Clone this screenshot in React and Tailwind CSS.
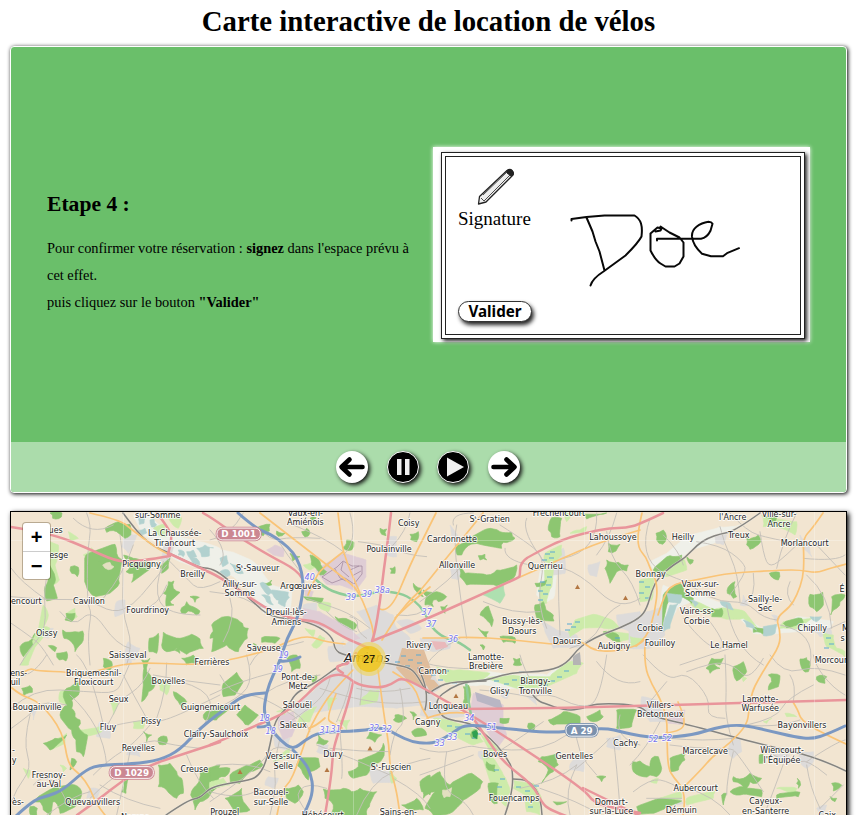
import React from "react";

// Each sheet is drawn at three times the map scale, from its own origin.
const sheets = [
  {
    x: 0, y: 505,
    water: ["400,30 450,35 490,70 540,95 600,110 660,130 660,200 600,190 530,165 480,120 430,90"],
    pond: ["415,40 435,38 432,55 418,58", "450,45 462,42 470,60 455,66", "535,135 552,140 550,155 535,150", "560,140 580,135 590,155 572,162", "590,130 615,120 640,128 635,150 605,155", "570,160 590,160 600,180 580,180", "410,75 435,70 440,84 418,88"],
    meadow: ["150,110 175,120 165,180 178,225 155,240 135,215 150,170", "130,300 145,330 130,365 150,370 110,420 85,480 60,480 85,420 115,380", "205,80 235,100 210,112", "250,150 275,128 280,145 258,165", "460,70 495,58 500,95 475,90", "505,30 545,38 535,70 515,55", "200,325 225,310 232,335 205,345"],
    urban: ["370,80 410,90 385,145 365,125", "350,290 375,285 375,320 345,335", "385,410 420,430 405,465 375,455", "490,120 525,120 510,165 480,170", "125,365 160,370 145,400 120,395"],
    forest: ["258,150 345,118 350,145 370,165 358,235 320,268 285,275 258,240", "315,70 355,50 390,58 392,90 375,100 350,80 320,82", "370,150 400,160 455,178 450,192 395,232 400,205 378,200 390,180", "150,24 186,24 184,36 158,40", "138,165 165,215 160,240 172,280 140,288 135,245 145,220", "480,185 510,160 505,190 485,205", "505,230 522,228 520,250 540,262 510,290 522,300 498,303 500,270 490,265", "490,382 540,400 575,388 600,402 610,430 560,448 530,430 500,440 485,420", "448,400 475,385 470,445 447,440", "198,325 225,325 215,350 195,345", "188,375 210,382 225,380 248,378 245,415 225,440 215,412 192,400", "60,425 85,410 105,385 98,420 70,455", "170,445 200,440 198,468 178,465", "145,422 170,428 165,440", "212,185 235,187 232,215 215,205", "645,375 660,365 660,400 630,400", "545,308 560,290 570,302 600,318 588,330 565,318 545,325", "570,275 598,277 585,292", "515,435 545,420 540,445", "295,170 300,165 304,172"],
    clear: ["308,180 330,172 342,185 325,194"],
    roads: ["260,24 275,60 262,140 262,300 275,320 262,400 270,480", "34,275 140,285 262,282 340,325 400,300 450,240 500,180", "130,60 160,140 130,250 140,370 90,430 60,480", "360,90 372,170 365,320 400,420 380,480", "500,160 560,220 600,260 660,230", "220,40 275,95 340,60", "180,320 220,370 275,310 350,420 390,430", "34,355 100,400 130,430 160,480", "140,285 60,230 34,190", "400,120 370,210 310,280", "500,240 480,300 420,320", "490,170 460,250 500,330 600,330"],
  },
  {
    x: 210, y: 505,
    water: ["0,130 60,140 130,170 180,240 245,260 240,320 160,325 130,270 60,210 0,185"],
    pond: ["30,160 50,152 55,175 38,185", "60,175 90,180 100,205 75,200", "150,235 165,235 190,265 175,270", "185,255 235,262 238,278 200,285", "155,270 180,275 190,300 170,290", "205,275 235,280 225,305 205,295", "130,190 150,185 150,200", "30,200 55,195 60,210 40,216"],
    meadow: ["325,290 362,295 355,320 330,310", "280,180 320,165 320,185 300,195", "285,370 315,375 310,395", "330,390 345,400 320,430 305,420"],
    mauve: ["318,195 400,145 468,165 468,215 435,258 390,240 350,238", "170,135 195,120 222,132 220,155 190,150", "280,310 330,320 410,365 450,400 420,410 350,370 280,345", "285,255 310,260 305,275 285,272"],
    urban: ["280,300 320,295 318,335 285,340", "440,320 500,300 550,330 560,370 600,400 600,480 400,480 380,440 430,395 480,370", "530,100 560,95 560,155 530,150", "560,350 600,345 635,370 600,385", "350,340 420,360 435,395 390,380", "355,425 400,410 400,465 360,470"],
    forest: ["5,360 45,335 90,350 100,365 115,370 112,400 85,440 50,420 5,440 10,390", "140,70 180,58 178,78 160,92 140,84", "200,78 225,85 205,94", "240,145 270,155 248,168", "300,150 330,170 350,200 330,210 305,180", "280,275 340,280 330,295 290,285", "375,335 398,340 440,360 430,375 385,350", "600,88 625,80 620,110 602,104", "410,105 432,112 425,135 398,128", "540,190 555,185 555,205 542,205", "155,398 210,400 195,415 155,412", "130,415 145,425 135,440", "300,40 318,38 310,50", "275,80 290,70 300,85 285,96", "510,70 530,72 528,92 515,88", "160,235 185,225 185,240", "610,235 635,250 640,275 620,260"],
    roads: ["0,105 60,95 100,24", "145,65 180,110 240,95 330,100", "420,24 445,110 400,150", "445,110 530,120 590,150 650,155", "250,60 350,100 400,140", "200,100 230,150 275,205", "0,260 90,270 150,310 250,330", "40,410 80,340 60,280", "290,280 350,300 430,330 480,370", "350,320 400,370 440,380", "420,335 445,340 440,380 470,400", "560,330 630,340 660,300", "120,480 145,430 230,425 280,410", "600,24 590,80 545,125", "0,75 60,140 30,180"],
  },
  {
    x: 420, y: 505,
    water: ["380,160 410,175 400,280 370,300 350,270 360,200"],
    meadow: ["375,145 425,120 425,150 400,180 375,170", "370,185 400,190 395,245 380,295 358,290 355,255 372,230", "445,380 465,345 520,328 580,348 600,370 545,368 490,370 450,395", "480,75 500,65 495,80 450,85", "435,24 455,24 440,50", "565,375 640,385 660,400 600,410"],
    mint: ["190,270 250,240 255,270 240,295"],
    urban: ["90,60 115,95 95,110", "85,170 125,180 115,225 95,220", "395,140 430,130 435,205 400,210", "505,180 540,170 530,215 510,210", "360,345 410,375 470,390 480,430 400,430 375,380", "590,330 660,320 660,395 600,370", "0,400 90,395 90,430 40,440 0,440"],
    forest: ["108,120 150,100 200,72 240,80 275,82 285,100 250,112 245,130 180,118 145,122 125,150 112,150", "115,185 135,205 200,210 230,195 290,180 280,220 230,242 140,240 120,215", "395,38 425,40 420,95 395,95 385,75", "560,165 595,172 625,180 620,198 590,200 570,235 555,190", "565,115 600,118 588,138 565,140", "180,330 205,303 220,345 215,365", "345,300 370,290 378,315 400,330 402,348 355,345", "10,255 50,260 80,275 55,290 40,285 40,305 15,300 20,275", "62,305 82,300 75,325", "175,152 195,148 200,165 180,165", "345,235 380,225 375,240 350,245", "175,370 205,380 200,400", "240,395 285,398 285,415 250,412", "550,380 595,390 600,410 570,400", "180,420 195,425 190,435", "480,24 560,24 500,42"],
    roads: ["110,60 100,100 125,310 140,400", "100,60 90,24 160,24", "240,60 335,120 375,165 350,300 380,370", "255,130 250,165 330,180", "430,160 535,140 530,24", "430,190 480,205 600,320 660,280", "415,190 415,290 420,390", "0,290 100,220 125,180", "320,40 300,80 380,180", "560,80 570,160 640,230 660,300", "190,290 280,330 360,320", "450,430 520,410 560,320 600,300", "590,24 570,100 530,150", "20,480 40,440 120,400"],
  },
  {
    x: 630, y: 505,
    water: ["60,170 100,150 170,90 270,65 330,60 260,110 190,130 120,190 80,210", "100,240 180,260 290,300 340,330 400,370 440,365 500,335 610,350 600,375 450,385 370,385 320,335 250,325 190,290 140,310 105,370 80,400"],
    pond: ["110,265 155,270 150,295 115,290", "120,300 145,295 120,370 100,380 110,330", "270,290 300,295 310,315 275,300", "340,345 370,360 380,375 350,365", "400,365 440,358 435,385 400,392", "540,335 575,335 560,350", "180,285 205,295 195,305"],
    meadow: ["30,225 70,220 65,285 30,290", "395,30 500,50 495,90 455,70 400,65", "180,295 200,290 250,315 290,310 345,320 380,365 340,340 280,340 220,325", "580,380 610,390 620,430 645,440 645,455 590,425", "0,395 50,400 20,425 0,420", "90,200 160,160 170,195 110,215", "460,350 545,340 500,372 450,370"],
    urban: ["50,320 105,300 105,390 60,430 0,430 0,370", "255,90 290,90 280,120 258,115", "510,90 540,120 545,155 520,130", "340,270 355,300 330,300", "425,330 450,340 435,350", "555,380 600,370 605,390 570,395"],
    forest: ["78,85 100,75 108,105 98,118 80,105", "70,195 120,152 155,150 160,165 120,190 90,205 75,205", "350,100 385,90 392,110 360,133 350,120", "540,268 578,262 580,300 560,320 540,305", "605,275 645,270 630,290 620,310 602,330", "100,270 150,235 160,260 190,280 185,295 150,275 115,290 98,365", "370,365 420,372 400,388 370,382", "460,355 515,340 520,352 470,368", "245,310 275,310 275,335 245,335", "418,205 448,202 445,225 430,220", "170,155 190,165 180,178", "300,240 315,230 320,275 310,280 292,265", "245,460 280,460 270,480 235,480", "510,462 530,458 535,480 512,475", "405,35 440,32 430,55"],
    roads: ["60,40 40,100 60,180 130,220 200,240", "270,65 280,110 325,205 330,290", "160,180 150,140 100,90", "200,110 270,120 340,170 350,205 300,270", "390,80 400,150 420,190 470,150 500,120", "300,24 350,80 420,100 520,120", "500,24 460,100 440,190", "370,205 380,280 345,290", "180,240 250,290 350,290 400,340 440,345", "160,340 230,430 300,430 240,350", "290,300 310,430 400,480", "300,430 150,480", "520,160 620,170 645,150", "530,210 600,270 605,370", "560,120 645,210", "450,360 560,380 540,480", "490,300 460,270 480,230", "600,370 645,350"],
  },
  {
    x: 0, y: 655,
    meadow: ["180,110 205,105 200,150 178,140", "135,265 200,235 195,265 150,285", "330,140 355,145 340,180", "240,225 300,215 305,230 245,245", "400,200 430,195 430,220 400,220", "180,330 200,340 190,350", "70,340 90,345 85,370", "470,70 510,80 500,120 480,105"],
    urban: ["300,200 325,205 330,250 290,245", "350,120 375,125 370,145", "390,275 420,280 420,305 380,300", "370,0 400,0 395,25 375,30", "270,400 300,405 290,430 260,430", "90,160 110,165 100,195"],
    forest: ["200,100 232,75 235,120 215,135 215,160 225,185 240,195 235,215 262,240 250,305 230,290 228,255 215,225 180,180 200,150 190,125", "425,15 450,10 440,50 465,90 445,110 425,140 430,90 430,50", "65,100 90,92 97,112 70,122", "520,110 560,140 550,160 535,140", "430,230 455,240 440,260", "475,330 510,325 530,350 545,370 550,415 530,430 500,405 475,395", "600,350 660,330 660,395 630,420 600,440 585,465 572,420 590,390", "160,400 225,390 245,410 230,450 180,475 165,440 100,440", "110,430 160,400 150,480 130,465", "545,10 580,0 585,25 560,30", "610,180 640,160 660,175 650,195 615,195", "475,250 500,245 498,268 478,268", "370,380 385,370 378,415 365,410", "310,10 335,20 330,45 310,35", "130,265 165,250 200,240 150,285", "215,310 230,320 210,345", "90,455 112,460 110,480 90,478"],
    roads: ["34,160 100,100 260,110 350,115 370,70 390,24", "210,120 310,210 320,330", "310,210 270,30 230,0", "320,215 345,170 360,135 430,90 450,40", "34,220 90,180 130,135 200,150", "325,215 440,190 460,205 540,180 660,120", "450,210 400,270 330,310 280,360", "440,190 400,120 370,60", "400,280 450,250 510,270 600,280", "390,290 380,340 350,480", "90,180 70,260 95,340 50,400 34,440", "200,440 150,330 100,390", "470,190 500,110 500,24", "590,240 640,180 620,100 540,80", "560,300 590,380 640,430", "300,390 380,440 480,460", "34,60 90,80 140,0", "270,430 330,370 370,350", "140,480 220,420 270,410", "460,60 560,80 660,90"],
  },
  {
    x: 210, y: 655,
    meadow: ["275,180 320,155 300,200 260,215", "0,380 40,370 60,390 0,405", "480,105 505,105 500,140 450,150 460,125", "385,195 420,195 410,225", "190,320 240,280 230,310", "350,130 380,130 355,165", "540,340 560,370 545,385", "200,170 230,155 225,180"],
    mauve: ["205,180 250,170 260,210 245,245 220,255 205,220"],
    urban: ["350,60 430,20 560,20 640,110 650,150 560,160 440,155 330,170 260,190 250,160 310,110", "325,265 355,270 355,300 320,290", "190,240 240,250 235,285 195,275", "175,365 205,370 190,400 165,390", "480,340 545,350 555,385 490,385", "640,150 660,140 660,180 640,175"],
    forest: ["40,85 80,52 100,80 75,120 40,125", "80,180 105,150 145,180 115,210 100,200", "270,310 325,310 330,335 300,350 295,375 275,345 260,330", "325,240 355,258 340,270 320,265", "445,315 505,290 520,265 518,310 480,335 470,360 430,370 415,350 445,335", "340,402 400,400 425,410 450,400 500,410 478,455 470,480 360,480 370,450 345,430", "225,400 265,390 280,410 255,445 230,430", "60,360 120,330 150,315 160,330 120,350 90,385 62,385", "45,430 95,400 100,440 120,465 70,470", "0,345 60,340 45,365 0,380", "555,180 590,190 575,200 550,195", "605,230 635,220 650,240 615,245", "480,230 515,240 495,262 470,250", "630,380 660,360 660,420 635,410", "0,175 30,150 60,160 15,195", "600,170 620,180 610,195", "230,10 260,0 270,40 245,50", "290,65 320,60 310,85", "575,450 620,430 640,465 600,470"],
    roads: ["110,0 130,70 90,130 0,170", "30,60 60,120 160,120 260,190", "0,120 80,80 200,50", "165,115 230,70 330,60", "240,200 300,160 350,110 360,70", "330,100 420,130 560,150 650,140", "300,230 280,180 230,160", "360,280 450,290 540,290", "390,230 400,350 395,370", "320,270 430,310 540,360", "550,350 480,380 440,480", "540,350 600,320 660,310", "550,370 640,420 660,460", "210,250 190,330 200,400 180,480", "250,290 200,260 150,330 60,400 0,440", "150,400 100,440 0,410", "570,100 590,200 550,230 540,300", "425,30 430,90 380,200", "450,30 460,80 450,150", "350,400 290,380 250,430 300,480", "600,100 500,120 440,100", "20,330 120,320 180,350"],
  },
  {
    x: 420, y: 655,
    water: ["100,60 210,50 300,60 380,60 440,20 480,25 460,60 380,95 260,100 180,90 80,85"],
    meadow: ["50,35 110,45 210,55 180,75 80,85 60,70", "200,70 290,62 390,65 450,20 490,25 470,55 380,95 290,100", "40,190 100,200 170,225 190,260 160,270 90,235 60,215", "185,300 220,310 250,360 270,410 260,455 220,410", "280,375 340,385 365,435 360,480 320,470 315,420 280,400", "180,235 230,270 240,300 210,290"],
    mauve: ["160,115 250,150 250,210 260,240 230,280 190,210 150,190"],
    urban: ["0,60 45,65 65,95 30,115 60,150 110,160 140,180 60,190 0,180", "455,15 480,0 482,28 460,32", "320,125 350,125 350,150", "175,290 210,290 210,320 180,310", "455,320 490,300 490,350 450,345", "560,250 600,240 600,285 560,275", "245,100 265,105 262,130 245,125"],
    forest: ["130,95 145,90 150,130 140,160 130,140", "385,195 430,170 480,185 480,210 400,210", "590,165 650,165 635,215 590,220", "365,305 410,295 415,330 400,350 365,385 385,345 355,320", "0,390 30,370 60,350 90,390 155,355 188,380 180,400 130,435 90,475 40,480 15,460 45,410 10,430", "155,230 172,225 172,252 155,250", "500,185 540,165 550,185 520,200", "325,205 345,210 340,230 328,225", "530,365 558,365 545,380", "200,320 225,330 225,350 205,345", "205,385 235,385 232,445 215,440", "240,190 268,190 265,203 240,203", "400,440 440,440 410,450", "280,10 300,10 305,30 280,30"],
    clear: ["68,405 95,398 90,425 72,428"],
    roads: ["0,280 60,300 150,270 180,280 370,290 440,240", "0,360 60,340 160,300", "340,125 380,110 480,160 540,140 560,0", "470,215 460,290 530,360", "570,250 530,290 470,340", "580,250 590,330 600,460", "200,310 240,290 370,200", "350,130 260,110 180,105", "470,330 430,410 450,480", "80,290 60,400 140,440 160,480", "600,180 580,250 660,270", "300,0 310,40 340,90", "300,400 410,380 470,330", "0,20 80,45 180,40", "360,400 480,440 540,480", "530,20 590,100 660,80"],
  },
  {
    x: 630, y: 655,
    meadow: ["170,430 255,410 250,430 170,450", "465,175 500,185 470,185", "400,200 425,190 410,205", "60,380 85,370 80,385", "440,400 500,400 490,420", "90,430 150,410 155,430 100,450", "340,65 350,70 340,80"],
    mauve: ["105,175 165,165 160,210 115,205"],
    urban: ["35,125 90,140 110,200 60,200 35,175", "300,260 330,250 335,290 310,310 295,290", "510,290 550,290 550,320 530,340 510,320", "120,430 150,420 160,445 130,450", "560,460 590,450 580,480", "430,300 480,300 470,320"],
    forest: ["8,320 30,318 60,335 65,310 85,305 95,340 80,365 60,360 40,365 10,350", "120,310 165,297 165,315 145,345 120,350", "310,35 340,20 350,50 320,78", "228,40 250,25 270,40 240,55", "310,365 340,370 360,355 395,370 380,385 360,380 350,400 395,405 395,425 360,420 330,420 300,410 340,395 310,380", "440,420 510,412 505,425 440,432", "20,455 90,430 155,438 110,455 60,475 20,478", "388,300 398,297 398,325 388,325", "502,370 512,390 505,400 500,385", "415,60 450,62 445,95 415,105 425,80", "560,65 590,65 585,85 565,80", "510,15 540,20 535,50 518,45", "605,385 635,390 610,408", "600,425 620,430 615,440", "0,175 15,165 0,205", "275,420 290,415 280,450"],
    roads: ["40,0 110,80 170,50 240,130 230,190 285,190", "110,80 60,140", "170,50 250,20 310,30 360,80 400,10", "285,0 290,90 285,190 310,270", "420,0 460,60 560,30 645,60", "350,210 440,190 470,130 550,90", "490,140 500,90 480,60", "510,195 440,220 350,210", "90,200 50,280 0,330", "120,270 200,280 300,280 320,290 400,410", "310,290 290,370 290,420", "430,300 490,330 530,310 590,360", "530,330 540,400 570,460", "470,300 430,410 410,460", "120,250 220,260 310,250", "530,320 620,260 645,255", "10,410 60,370 120,380 165,410", "170,400 250,420 300,480", "550,0 555,30 610,100 645,120", "570,460 640,390", "50,430 120,430 155,430"],
  },
];

const motorway = [
  "238,513 255,528 270,534 282,542 293,552 300,565 303,580 303,592 298,618 287,638 280,661 273,675 266,693 263.5,715 271,729 280,740 293,750 305,740 320,732 360,731 383,727 397,735 412,742 427,743.5 437,742 453,733 465,724 500,728 550,733 580,730 606,728 622,732 640,736 660,738 693,735 715,728 733,725 748,726 770,731 795,737 812,739 828,734 845,726",
  "293,750 305,762 311,775 313,788 310,802 303,816",
  "265,693 246,694 230,705 200,728 180,750 160,760 133,764 97,765 83,772 63,790 48,796 33,800 15,817",
  "280,661 290,662 300,657", "258,727 272,727 268,721",
];
const primary = [
  "203,513 212,518 237,536 270,556 297,570 302,578",
  "391,513 388,540 384,568 380,602 375,632 372,641 372,641 420,622 518,578 520,576 520,566 524,560 530,556 563,539 590,532 610,528 626,528 640,524 663,513",
  "11,527 50,533 87,548 115,561 135,562 170,556",
  "168,553 200,568 220,577 253,600 275,613 297,620 318,621 343,637 357,643 368,648",
  "157,513 170,530 172,540 168,554",
  "210,745 253,727 292,710 323,678 343,673 357,685 380,688 392,684 402,677 427,690 440,698 477,718 583,788 594,803 615,808 640,813", "343,673 334,668 343,664 349,664 356,653", "583,788 620,806 640,816",
  "353,683 349,700 342,722 336,740 333,752 331,780 325,815",
  "220,742 180,755 150,765 123,780 98,800 77,815",
  "460,709 530,708.5 640,706 740,703 846,700",
  "473,718 488,740 503,762 533,785 542,803 550,810 566,816",
];
const secondary = [
  "90,513 120,520 131,529 143,538 158,549 170,555",
  "260,513 295,540 327,565 345,579 358,590 368,614 373,628 374,640", "338,513 340,530 343,552 352,575 360,593", "343,552 326,565 315,577 308,595",
  "436,513 425,535 410,565 390,613 380,609", "483,513 463,538 448,556 433,575 420,591 410,600 397,616 394,621 382,640", "395,618 409,604 430,587",
  "520,577 563,558 593,545 620,536 640,530",
  "423,638 443,638 470,637 506,639 563,645.5 572,641 583,642 593,650 613,652 640,645 644,640",
  "642,513 638,530 638,548 646,557 650,568 658,585 655,612 647,638 636,646", "645,643 644,665 652,685 660,698 667,718 667,740 668,768 674,778 683,788 685,805 683,815",
  "658,615 665,592 675,584 685,582 705,578 730,573 783,570 800,570 817,573 830,568 846,564",
  "823,513 812,529 803,538 804,560 803,578 797,595 790,607 776,618 780,630 780,645 767,665 758,680 752,692 749,710 747,725 730,743 712,757 701,770 683,788",
  "793,702 798,710 801,720 820,732 846,744", "678,702 685,717 683,731 666,733",
  "12,688 20,695 40,702 63,732 68,765 80,774 90,788 96,804 105,815", "11,675 20,675 30,668 37,671 70,672 76,676 100,670 133,662 193,665 220,662 255,654 277,647 293,639 310,636 325,642 345,644",
  "353,670 332,692 323,705 311,725 303,748 296,768 290,782 282,790 277,815", "325,718 315,727 309,728", "336,694 326,718 333,724 342,728",
  "378,670 382,700 385,722 389,745 390,768 395,785 398,800 400,815",
  "393,672 408,681 417,692 421,707 428,718", "427,718 447,711 465,713",
];
const rail = [
  "123,513 132,525 143,538 155,547 167,552 200,568 210,568 223,575 253,602 270,617 300,620 320,627 333,638 335,650 343,655 380,662 397,665 410,668 417,675 428,695 433,690 448,682 486,681 507,673 550,671 567,663 577,650 587,642 603,634 620,628 640,618 647,608 652,590 658,578 673,565 685,558 697,545 708,538 720,534 735,531 760,513",
  "486,681 468,681 450,688 435,700 440,715 450,720 470,723 483,732 497,745 508,760 513,770 512,795 505,815", "513,779 522,779 531,783 541,797 542,815", "418,668 430,690 425,710",
  "533,695 537,700 543,703 566,710.7 582,709 597,703 640,705 650,716 690,725 763,745 817,757 846,771",
  "353,658 337,667 320,680 305,688 295,694 287,708 275,720 270,745 265,765 258,776 250,780 225,784 210,788 200,798 188,800 166,815",
];
const green = ["315,579 325,588 340,594 355,597 380,591 400,593 414,600 425,612 431,627 444,638 458,641 470,650", "466,682 468,700 471,715"];

const labels = [
  ["sur-Somme",157.7,514.5],["ues",55.7,530],["esge",58.7,554.7],["La Chaussée-",174.7,533],["Tirancourt",174.7,542.7],["Picquigny",141.5,563.5],["Breilly",192.7,573.5],["encourt",26.3,600.7],["Cavillon",89,601],["Fourdrinoy",147.7,609.7],["Oissy",46.7,633],["Saisseval",127.7,655.3],
  ["Vaux-en-",305.3,513],["Amiénois",305.3,521.7],["Coisy",408.7,522.7],["Poulainville",389,549.3],["Sᵗ-Sauveur",257.7,568],["Ailly-sur-",239.7,583.7],["Somme",239.7,592.7],["Argœuves",300.7,585.5],["Dreuil-lès-",286.3,612],["Amiens",286.3,621.5],["Saveuse",263.7,648],["Ferrières",212,661.7],["Rivery",419,645],
  ["Sᵗ-Gratien",489.7,518.7],["Frechencourt",559,513.3],["Cardonnette",452,539.3],["Lahoussoye",613,537.3],["Allonville",457,564.7],["Querrieu",545.3,566],["Bussy-lès-",522.3,621.3],["Daours",522.3,630.7],["Daours",567,641],["Aubigny",614,645.7],["Lamotte-",486,656.7],["Brebière",486,665.7],
  ["l'Ancre",732.7,517],["Ville-sur-",779,514.3],["Ancre",779,524],["Heilly",683,537.3],["Treux",738.7,534.7],["Morlancourt",804.7,542.7],["Bonnay",650.7,574.3],["Vaux-sur-",700.3,583.7],["Somme",700.3,593],["Sailly-le-",765,598.7],["Sec",765,608],["Vaire-ss-",696.7,611.3],["Corbie",696.7,620.7],["Corbie",650,628.3],["Fouilloy",660,643.3],["Le Hamel",729,645.3],["Chipilly",812.3,628.3],["Morcourt",832.5,659.7],["É",842,589],["M",845.5,628],["s",842.5,638],
  ["ens-",18.7,673],["uil",15.5,682.3],["Briquemesnil-",93.7,673],["Floxicourt",93.7,682.3],["Bovelles",168.3,681.3],["Seux",118.7,699.3],["Bougainville",37,706.7],["Guignemicourt",210.5,707.3],["Pissy",151,721],["Fluy",108,727],["Clairy-Saulchoix",216,734.3],["Revelles",138.3,748],["Creuse",194.3,769.3],["Fresnoy-",48.7,774.7],["au-Val",48.7,784.3],["Quevauvillers",92.7,801.7],["ès-",18,801.7],["Namps",135,816.5],["Prouzel",224.7,812],["-",13.5,750],["y",14,759.5],
  ["Pont-de-",298,677],["Metz",298,686.3],["Salouël",297.3,704.7],["Saleux",293.3,725.3],["Vers-sur-",283.3,756.3],["Selle",283.3,765.7],["Dury",333,754],["Sᵗ-Fuscien",391,767.3],["Bacouel-",271,792.3],["sur-Selle",271,801.7],["Hébécourt",322.7,815],["Sains-en-",398.3,811.7],
  ["Camon",432.7,670.7],["Glisy",499.7,691],["Blangy-",535.3,681.3],["Tronville",535.3,690.7],["Longueau",448.3,705.7],["Cagny",427.7,722],["Boves",495,754],["Gentelles",574.3,755.7],["Cachy",625.7,743.3],["Fouencamps",514,798.3],["Domart-",611.3,802],["sur-la-Luce",611.3,811],
  ["Villers-",660.3,704.7],["Bretonneux",660.3,714],["Lamotte-",760.3,699],["Warfusée",760.3,708.3],["Bayonvillers",802,725.3],["Marcelcave",705.3,750.7],["Wiencourt-",782,750.3],["l'Équipée",782,759.7],["Aubercourt",695.7,788.3],["Cayeux-",765.7,801],["en-Santerre",765.7,810.7],["Démuin",681.3,809.7],["Caix",827.3,815],
];
const exits = [["40",309.7,577],["39",351,596.7],["39",367,593.7],["38a",382.3,590],["37",426.7,612],["37",431.3,623.5],["36",453,639],["19",283.5,654.5],["19",277.7,669],["18",264.7,718.3],["18",270.7,731.3],["31",324.7,729.7],["31",335.7,728.7],["32",374,727.7],["32",386.7,729],["34",469.3,718],["51",491.7,726.7],["33",452.3,736.7],["33",439.7,742.7],["52",653.3,738.7],["52",667,738]];
const marsh = [[548,554],[553,552],[545,560],[552,558],[543,582],[549,585],[541,591],[546,594],[541,600],[550,577],[568,630],[574,627],[578,622],[570,624],[618,638],[642,582],[648,587],[642,593],[648,598],[434,675],[441,680],[447,671],[455,683],[515,680],[507,684],[553,681],[560,677],[522,672],[546,685],[567,671],[497,681],[450,726],[458,727],[468,734],[475,738],[479,734],[497,770],[503,779],[500,787],[519,787],[528,791],[534,800],[531,807],[537,786],[829,638],[832,644],[827,648],[404,656],[411,660],[419,655],[408,666],[420,663],[398,662]];
const peaks = [[577.5,587],[625.5,598],[240,772],[327,770],[370,748.5],[456,696]];

const parse = (s) => s.trim().split(" ").map((p) => p.split(",").map(Number));

// Rounds the corners of a road by running curves between segment midpoints.
function curve(s) {
  const p = parse(s);
  let d = `M${p[0]}`;
  for (let i = 1; i < p.length - 1; i++) {
    const end = i === p.length - 2 ? p[i + 1] : [(p[i][0] + p[i + 1][0]) / 2, (p[i][1] + p[i + 1][1]) / 2];
    d += `Q${p[i]} ${end}`;
  }
  if (p.length === 2) d += `L${p[1]}`;
  return d;
}

// Breaks every long edge of a wood or field into a small uneven outline.
function ragged(s, amount) {
  const p = parse(s);
  const out = [];
  p.forEach((a, i) => {
    const b = p[(i + 1) % p.length];
    const dx = b[0] - a[0], dy = b[1] - a[1];
    const len = Math.hypot(dx, dy) || 1;
    const n = Math.max(1, Math.round(len / 10));
    out.push(a.join());
    for (let k = 1; k < n; k++) {
      const r = Math.sin(a[0] * 12.9 + a[1] * 78.2 + k * 37.7) * amount;
      out.push(`${(a[0] + (dx * k) / n - (dy / len) * r).toFixed(1)},${(a[1] + (dy * k) / n + (dx / len) * r).toFixed(1)}`);
    }
  });
  return out.join(" ");
}

function Lines({ list, stroke, width, opacity = 1 }) {
  return (
    <g fill="none" stroke={stroke} strokeWidth={width} strokeLinejoin="round" strokeLinecap="round" opacity={opacity}>
      {list.map((p, i) => <path key={i} d={curve(p)} />)}
    </g>
  );
}
function Areas({ list = [], fill, rough = 3 }) {
  return list.map((p, i) => <polygon key={i} points={ragged(p, rough)} fill={fill} stroke={fill} strokeWidth="2" strokeLinejoin="round" />);
}
function Shield({ x, y, w, text, fill }) {
  return (
    <g>
      <rect x={x - w / 2} y={y - 7.2} width={w} height="14.4" rx="6.5" fill={fill} />
      <rect x={x - w / 2 + 1.3} y={y - 5.9} width={w - 2.6} height="11.8" rx="5.2" fill="none" stroke="#fff" strokeWidth=".9" />
      <text x={x} y={y + 3.2} fontSize="8.8" fontWeight="700" fill="#fff" textAnchor="middle">{text}</text>
    </g>
  );
}

function CountryMap() {
  return (
    <svg className="block h-[318px] w-[835px]" viewBox="11 512 835 318" fontFamily="'DejaVu Sans', sans-serif">
      <rect x="11" y="512" width="835" height="318" fill="#f2e5d1" />
      {sheets.map((s, i) => (
        <g key={i} transform={`translate(${s.x} ${s.y}) scale(.33333)`}>
          <Areas list={s.water} fill="#eff0e9" />
          <Areas list={s.urban} fill="#dddbda" />
          <Areas list={s.mauve} fill="#dfcdd5" rough={1} />
          <Areas list={s.meadow} fill="#cdebaa" />
          <Areas list={s.mint} fill="#aee0b0" rough={1} />
          <Areas list={s.forest} fill="#8dc671" rough={4} />
          <Areas list={s.clear} fill="#e3dfc0" />
          <Areas list={s.pond} fill="#b2d1cf" />
        </g>
      ))}
      {sheets.map((s, i) => (
        <g key={i} transform={`translate(${s.x} ${s.y}) scale(.33333)`}>
          <Lines list={s.roads} stroke="#c4bfb9" width="2.7" />
        </g>
      ))}
      <path d="M322 577l15-10 6-6 9 5h10v8l-8 10-9-6-13 5zM335 569l5 9 6 3M343 562l-2 8 8 7M350 570l9-4M352 576l9-5" fill="none" stroke="#9c829a" strokeWidth=".7" />
      <polygon points="402,648 424,650 433,675 425,688 408,681 396,668" fill="#dfbd9c" />
      <polygon points="423,678 434,680 440,687 430,692" fill="#dfbd9c" />
      <polygon points="431,641 445,642 448,647 436,650" fill="#e9b9bb" />
      <polygon points="573,656 580,652 581,665 573,665" fill="#b5b4b4" />
      <polygon points="475,692 500,700 503,710 477,701" fill="#b9b6c4" />
      {marsh.map(([x, y], i) => <path key={i} d={`M${x - 3} ${y}h5`} stroke="#58a9d3" strokeWidth="1" />)}
      <Lines list={green} stroke="#8fcc98" width="2.5" />
      <Lines list={rail} stroke="#eee9df" width="2.4" opacity={0.7} />
      <Lines list={rail} stroke="#858480" width="1.5" />
      <Lines list={secondary} stroke="#fac477" width="1.7" />
      <Lines list={primary} stroke="#e9959b" width="2.5" />
      <Lines list={motorway} stroke="#7b98c2" width="3" />
      <path d="M123.500 512v303M353.500 512v303M584.500 512v303M814.500 512v303M11 540.500h835" stroke="#fff" strokeWidth=".6" opacity=".45" />
      {peaks.map(([x, y], i) => <path key={i} d={`M${x - 2.5} ${y + 2}l2.5-4.5 2.5 4.5z`} fill="#b37743" />)}
      <path d="M472 732l4-2 2 3-1 6-4-2z" fill="#2fa050" />
      <Shield x={238.7} y={534} w={46} text="D 1001" fill="#cb8792" />
      <Shield x={131.7} y={772.5} w={46} text="D 1029" fill="#cb8792" />
      <Shield x={581.7} y={730.3} w={34} text="A 29" fill="#7b91ad" />
      <g textAnchor="middle" stroke="#fff" strokeOpacity=".75" strokeWidth="1.8" strokeLinejoin="round" style={{ paintOrder: "stroke" }}>
        <g fontSize="8" fontStyle="italic" fill="#7875ef">
          {exits.map(([t, x, y], i) => <text key={i} x={x} y={y + 3}>{t}</text>)}
        </g>
        <g fontSize="8" fill="#262626">
          {labels.map(([t, x, y], i) => <text key={i} x={x} y={y + 3}>{t}</text>)}
        </g>
        <text x="367" y="661.5" fontSize="12.4" fontStyle="italic" fill="#222">Amiens</text>
      </g>
      <circle cx="369" cy="659" r="17" fill="#f1d357" fillOpacity=".6" />
      <circle cx="369" cy="659" r="13" fill="#f0c20c" fillOpacity=".72" />
      <text x="369" y="663" fontSize="11" fill="#000" textAnchor="middle" fontFamily="'Liberation Sans', sans-serif">27</text>
    </svg>
  );
}

function SignatureCard() {
  return (
    <div className="h-[195px] w-[377px] shrink-0 bg-white pt-[5px] pl-[8px] shadow-[0_0_4px_#fff]">
      <div className="h-[187px] w-[364px] border-[1.5px] border-[#222] bg-white p-[3px] shadow-[2px_2px_4px_#222]">
        <div className="relative flex h-full flex-col items-start justify-between border border-[#222] pt-[10px] pb-[12px] pl-[12px]">
          <div className="flex flex-col items-center">
            <svg width="40" height="40" viewBox="473 166 40 40" fill="none" stroke="#222" strokeLinejoin="round">
              <path d="M477.5 203l1-7.5 27.5-26q3-2 5 0t1 4.500l-27 27z" fill="#eee" strokeWidth="1.3" />
              <path d="M480 197l3 3 26-26M482 194l25-24" strokeWidth=".8" />
              <path d="M506 169.500q3-2 5 0t1 4.500l-2 1-4-3z" fill="#222" />
            </svg>
            <span className="text-[19px] leading-[23px]">Signature</span>
          </div>
          <button className="flex h-[21px] w-[74px] items-center justify-center rounded-full border border-[#333] bg-white font-['Noto_Sans',sans-serif] text-[15.2px] leading-none font-bold shadow-[2px_3px_4px_#222]">Valider</button>
          <svg className="absolute top-[56px] left-[122px]" width="180" height="80" viewBox="568.5 212.500 180 80" fill="none" stroke="#080808" strokeWidth="2" strokeLinejoin="round" strokeLinecap="round">
            <path d="M572 220v-1.500l15-2 18-1.500h30q5 3 6.500 8t.5 13q-3 6-16 19l-22 16q-11 7-13 14M587 217l6 14 3 10 4 10 5 19" />
            <path d="M656 231l5-1 1-2-4-1-7 6v17q5 10 10 13l5 3h9l5-3 4-7v-14l-4-5-10-5-9-6M657.500 240v-1.800h44q6-1 9.500-8l2-7q-1-2-4-2-7 1-12 5-5 4-4.500 10 1 9 10 17l9 2.500h12l4-3 12-5" />
          </svg>
        </div>
      </div>
    </div>
  );
}

function Arrow({ flip }) {
  return (
    <button className="flex size-8 items-center justify-center rounded-full bg-white shadow-[2px_2px_4px_#111]">
      <svg className={flip ? "rotate-180" : ""} width="32" height="32" viewBox="0 0 32 32" fill="none" stroke="#000" strokeWidth="4.6" strokeLinecap="round" strokeLinejoin="round">
        <path d="M26.500 16H6M13.500 8.500L5.500 16l8 7.500" />
      </svg>
    </button>
  );
}
function Round({ children }) {
  return (
    <button className="flex size-8 items-center justify-center rounded-full border border-white bg-black shadow-[2px_2px_4px_#111]">
      <svg className="shrink-0" width="32" height="32" viewBox="0 0 32 32" fill="#f0f0f0">{children}</svg>
    </button>
  );
}

export default function App() {
  return (
    <div className="flex h-[815px] w-[861px] flex-col overflow-hidden bg-white font-['Liberation_Serif',serif] text-black">
      <h1 className="h-[46px] shrink-0 pt-[5px] pr-[4px] text-center text-[28.8px] leading-8 font-bold">Carte interactive de location de vélos</h1>
      <section className="ml-[10px] flex h-[447px] w-[837px] shrink-0 flex-col overflow-hidden rounded-[4px] border border-white bg-[#6abf6a] shadow-[1px_1px_4px_#000]">
        <div className="flex h-[395px] pl-[36px]">
          <div className="w-[386px] shrink-0 pt-[143px]">
            <h2 className="text-[21.6px] leading-[28px] font-bold">Etape 4 :</h2>
            <p className="mt-[17px] text-[14.4px] leading-[27px]">
              Pour confirmer votre réservation : <b>signez</b> dans l'espace prévu à<br />cet effet.<br />puis cliquez sur le bouton <b>"Valider"</b>
            </p>
          </div>
          <div className="pt-[100px]"><SignatureCard /></div>
        </div>
        <div className="flex h-[50px] items-center justify-center gap-[18.500px] bg-[#abdcab] pr-[1px]">
          <Arrow />
          <Round><path d="M10 8h4.500v16H10zM18 8h4.500v16H18z" /></Round>
          <Round><path d="M10 6.500v19L27 16z" /></Round>
          <Arrow flip />
        </div>
      </section>
      <section className="relative mt-[18px] ml-[10px] h-[320px] w-[837px] shrink-0 border border-black shadow-[2px_2px_5px_#000]">
        <CountryMap />
        <div className="absolute top-[11px] left-[12px] flex w-[27px] flex-col overflow-hidden rounded-[3px] bg-white font-['Liberation_Sans',sans-serif] text-[20px] leading-none font-bold shadow-[0_0_0_1px_rgba(80,60,30,.35)]">
          <button className="flex h-[29px] items-center justify-center border-b border-[#ccc]">+</button>
          <button className="flex h-[27px] items-center justify-center">−</button>
        </div>
      </section>
    </div>
  );
}
